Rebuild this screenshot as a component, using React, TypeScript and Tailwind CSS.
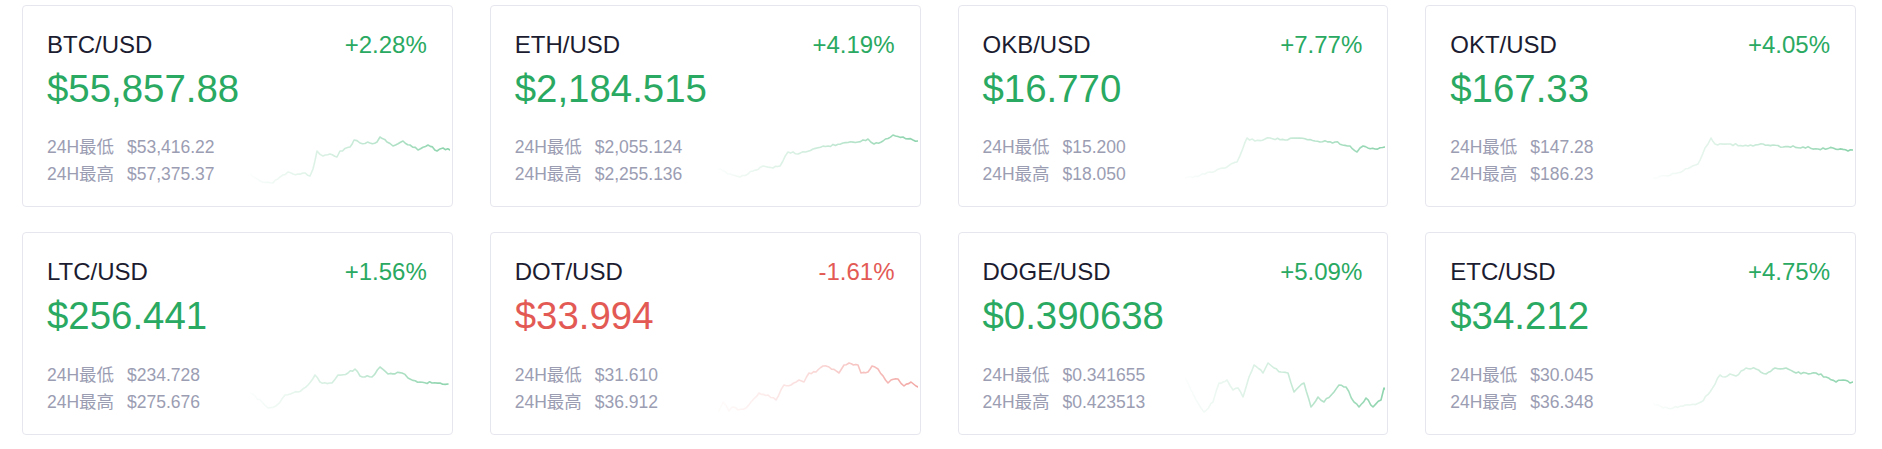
import React from 'react';

type Ticker = {
  pair: string;
  price: string;
  change: string;
  low: string;
  high: string;
  up: boolean;
  line: number[][];
};

// anchor points of each sparkline, svg box 200 x 72
const tickers: Ticker[] = [
  {
    pair: 'BTC/USD', price: '$55,857.88', change: '+2.28%', low: '$53,416.22', high: '$57,375.37', up: true,
    line: [[0,58],[10,65],[23,67],[30,61],[38,56],[43,58],[53,57],[60,60],[63,53],[67,35],[73,40],[80,38],[87,41],[90,35],[100,31],[104,24],[110,27],[120,27],[127,26],[130,21],[137,26],[143,30],[153,25],[160,29],[168,34],[178,29],[187,35],[193,32],[200,34]],
  },
  {
    pair: 'ETH/USD', price: '$2,184.515', change: '+4.19%', low: '$2,055.124', high: '$2,255.136', up: true,
    line: [[0,53],[12,58],[22,61],[35,55],[45,50],[55,52],[62,50],[70,36],[80,38],[95,33],[110,30],[125,27],[140,26],[150,23],[156,28],[165,25],[175,19],[185,21],[195,24],[200,25]],
  },
  {
    pair: 'OKB/USD', price: '$16.770', change: '+7.77%', low: '$15.200', high: '$18.050', up: true,
    line: [[0,62],[20,58],[40,52],[52,46],[58,32],[62,22],[70,25],[85,22],[100,24],[115,22],[130,25],[150,26],[165,30],[172,36],[178,30],[190,33],[200,31]],
  },
  {
    pair: 'OKT/USD', price: '$167.33', change: '+4.05%', low: '$147.28', high: '$186.23', up: true,
    line: [[0,62],[15,60],[30,55],[45,48],[52,32],[58,22],[62,28],[75,28],[95,30],[110,28],[130,31],[150,31],[165,33],[180,32],[195,35],[200,34]],
  },
  {
    pair: 'LTC/USD', price: '$256.441', change: '+1.56%', low: '$234.728', high: '$275.676', up: true,
    line: [[0,49],[12,58],[18,64],[27,61],[35,51],[48,48],[58,41],[65,31],[70,38],[82,39],[88,31],[98,29],[105,25],[110,32],[122,33],[130,23],[138,30],[152,29],[158,34],[170,38],[182,39],[190,39],[198,40]],
  },
  {
    pair: 'DOT/USD', price: '$33.994', change: '-1.61%', low: '$31.610', high: '$36.912', up: false,
    line: [[0,68],[5,58],[11,67],[15,63],[20,66],[28,64],[33,58],[41,49],[50,51],[58,56],[66,41],[73,41],[81,36],[86,38],[91,29],[98,28],[105,22],[111,23],[121,29],[126,21],[131,19],[140,21],[143,29],[150,28],[154,22],[160,25],[170,39],[173,36],[180,35],[186,42],[193,38],[198,42],[200,43]],
  },
  {
    pair: 'DOGE/USD', price: '$0.390638', change: '+5.09%', low: '$0.341655', high: '$0.423513', up: true,
    line: [[0,34],[6,46],[13,59],[19,68],[28,58],[34,39],[38,38],[42,36],[48,46],[53,44],[58,53],[64,33],[69,21],[78,29],[83,19],[89,24],[96,28],[103,29],[109,48],[119,39],[126,63],[133,53],[139,58],[149,48],[154,41],[161,43],[169,58],[174,63],[181,54],[188,63],[196,56],[199,44],[200,45]],
  },
  {
    pair: 'ETC/USD', price: '$34.212', change: '+4.75%', low: '$30.045', high: '$36.348', up: true,
    line: [[0,59],[10,64],[20,64],[37,61],[48,58],[57,48],[67,31],[72,33],[77,30],[83,32],[93,24],[103,25],[113,30],[122,24],[133,24],[143,29],[153,29],[163,29],[173,33],[183,38],[190,36],[197,39],[200,38]],
  },
];

const jitter = (i: number, seed: number) => {
  const s = Math.sin(i * 12.9898 + seed * 78.233) * 43758.5453;
  return (s - Math.floor(s) - 0.5) * 2.2;
};

const buildPath = (pts: number[][], seed: number) => {
  const out: string[] = [];
  let k = 0;
  for (let p = 0; p < pts.length - 1; p++) {
    const [x1, y1] = pts[p];
    const [x2, y2] = pts[p + 1];
    const steps = Math.max(1, Math.round((x2 - x1) / 2.5));
    for (let s = 0; s < steps; s++) {
      const t = s / steps;
      const x = x1 + (x2 - x1) * t;
      const y = y1 + (y2 - y1) * t + (s === 0 ? 0 : jitter(k, seed));
      out.push(`${x.toFixed(1)},${y.toFixed(1)}`);
      k++;
    }
  }
  const last = pts[pts.length - 1];
  out.push(`${last[0]},${last[1]}`);
  return 'M' + out.join(' L');
};

const Spark = ({ t, idx }: { t: Ticker; idx: number }) => {
  const color = t.up ? '#2fb069' : '#e8605a';
  const id = `spark-${idx}`;
  return (
    <svg width="200" height="72" viewBox="0 0 200 72" className="ml-auto shrink-0">
      <defs>
        <linearGradient id={id} gradientUnits="userSpaceOnUse" x1="0" y1="0" x2="200" y2="0">
          <stop offset="0%" stopColor={color} stopOpacity="0.02" />
          <stop offset="45%" stopColor={color} stopOpacity="0.22" />
          <stop offset="100%" stopColor={color} stopOpacity="0.55" />
        </linearGradient>
      </defs>
      <path d={buildPath(t.line, idx + 1)} fill="none" stroke={`url(#${id})`} strokeWidth="1.6" strokeLinejoin="round" strokeLinecap="round" />
    </svg>
  );
};

const Card = ({ t, idx }: { t: Ticker; idx: number }) => {
  const tone = t.up ? 'text-[#29a961]' : 'text-[#e35a55]';
  return (
    <div className="border border-[#e6e7ee] rounded-[4px] bg-white pl-6 pr-[2px] pt-[27px] pb-[18px]">
      <div className="flex justify-between pr-[23px] text-[24px] leading-none">
        <span className="text-[#1c1c31]">{t.pair}</span>
        <span className={tone}>{t.change}</span>
      </div>
      <div className={`mt-[13px] text-[38.4px] leading-none ${tone}`}>{t.price}</div>
      <div className="mt-[8px] flex items-end">
        <div className="text-[17.5px] leading-[27px] text-[#9b9db3]">
          <div className="flex">
            <span className="w-[80px]">24H最低</span>
            <span>{t.low}</span>
          </div>
          <div className="flex">
            <span className="w-[80px]">24H最高</span>
            <span>{t.high}</span>
          </div>
        </div>
        <Spark t={t} idx={idx} />
      </div>
    </div>
  );
};

const App = () => {
  return (
    <div
      className="min-h-screen w-full bg-white pt-[5px] pl-[22px] pr-[26px]"
      style={{ fontFamily: '"Liberation Sans", Arial, "Noto Sans CJK SC", sans-serif' }}
    >
      <div className="grid grid-cols-4 gap-x-[37px] gap-y-[25px]">
        {tickers.map((t, i) => (
          <Card key={t.pair} t={t} idx={i} />
        ))}
      </div>
    </div>
  );
};

export default App;
